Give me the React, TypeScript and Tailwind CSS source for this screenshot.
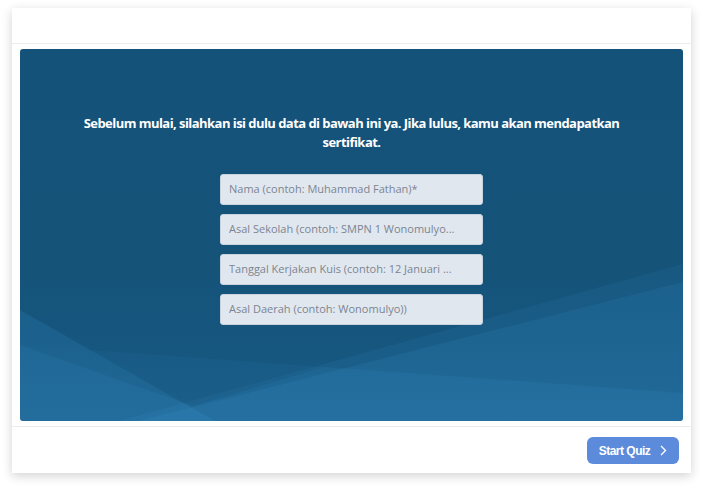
import React from "react";

const fields = [
  "Nama (contoh: Muhammad Fathan)*",
  "Asal Sekolah (contoh: SMPN 1 Wonomulyo...",
  "Tanggal Kerjakan Kuis (contoh: 12 Januari ...",
  "Asal Daerah (contoh: Wonomulyo))",
];

function Background() {
  return (
    <svg
      className="absolute inset-0 h-full w-full"
      viewBox="0 0 663 372"
      preserveAspectRatio="none"
    >
      <defs>
        <linearGradient id="bg" x1="0" y1="0" x2="0" y2="1">
          <stop offset="0" stopColor="#15527a" />
          <stop offset="0.6" stopColor="#155379" />
          <stop offset="1" stopColor="#175a85" />
        </linearGradient>
        <linearGradient id="lt" x1="0" y1="0" x2="0" y2="1">
          <stop offset="0" stopColor="#2f86c0" />
          <stop offset="1" stopColor="#3a92cc" />
        </linearGradient>
      </defs>
      <rect width="663" height="372" fill="url(#bg)" />
      <polygon points="0,261 195,372 0,372" fill="url(#lt)" opacity="0.22" />
      <polygon points="0,296 663,344 663,372 0,372" fill="url(#lt)" opacity="0.16" />
      <polygon points="663,215 663,233 118,372 100,372" fill="url(#lt)" opacity="0.12" />
      <polygon points="663,233 663,372 118,372" fill="url(#lt)" opacity="0.27" />
      <polygon points="0,296 304,318 173,357" fill="#0d3f60" opacity="0.12" />
    </svg>
  );
}

export default function App() {
  return (
    <div
      className="min-h-[489px] w-[703px] bg-white pt-2 pl-3"
      style={{ fontFamily: "'Open Sans', sans-serif" }}
    >
      <div className="flex h-[465px] w-[679px] flex-col bg-white shadow-[0_3px_10px_rgba(0,0,0,0.18)]">
        <div className="h-[36px] border-b border-[#ececec]" />
        <div className="px-2 pt-[5px]">
          <div className="relative h-[372px] overflow-hidden rounded-[3px]">
            <Background />
            <div className="relative flex flex-col items-center pt-[65px]">
              <p className="max-w-[560px] text-center text-[13px] font-bold leading-[19px] tracking-[-0.55px] text-white">
                Sebelum mulai, silahkan isi dulu data di bawah ini ya. Jika
                lulus, kamu akan mendapatkan sertifikat.
              </p>
              <div className="mt-[22px] flex flex-col gap-[9px]">
                {fields.map((f) => (
                  <div
                    key={f}
                    className="flex h-[31px] w-[263px] items-center rounded-[3px] border border-[#c9d3de] bg-[#e1e7ef] px-[8px] text-[11px] text-[#7b8591]"
                  >
                    <span className="truncate">{f}</span>
                  </div>
                ))}
              </div>
            </div>
          </div>
        </div>
        <div className="mt-[5px] flex flex-1 items-start justify-end border-t border-[#ececec] pr-3 pt-[10px]">
          <button
            className="flex h-[27px] w-[92px] items-center justify-center gap-[10px] rounded-[6px] bg-[#5c8bdc] text-[12px] font-bold tracking-[-0.5px] text-white"
            style={{ fontFamily: "'Liberation Sans', Arial, sans-serif" }}
          >
            <span>Start Quiz</span>
            <svg width="7" height="11" viewBox="0 0 7 11" fill="none">
              <path d="M1 1l4.5 4.5L1 10" stroke="white" strokeWidth="1.4" />
            </svg>
          </button>
        </div>
      </div>
    </div>
  );
}
